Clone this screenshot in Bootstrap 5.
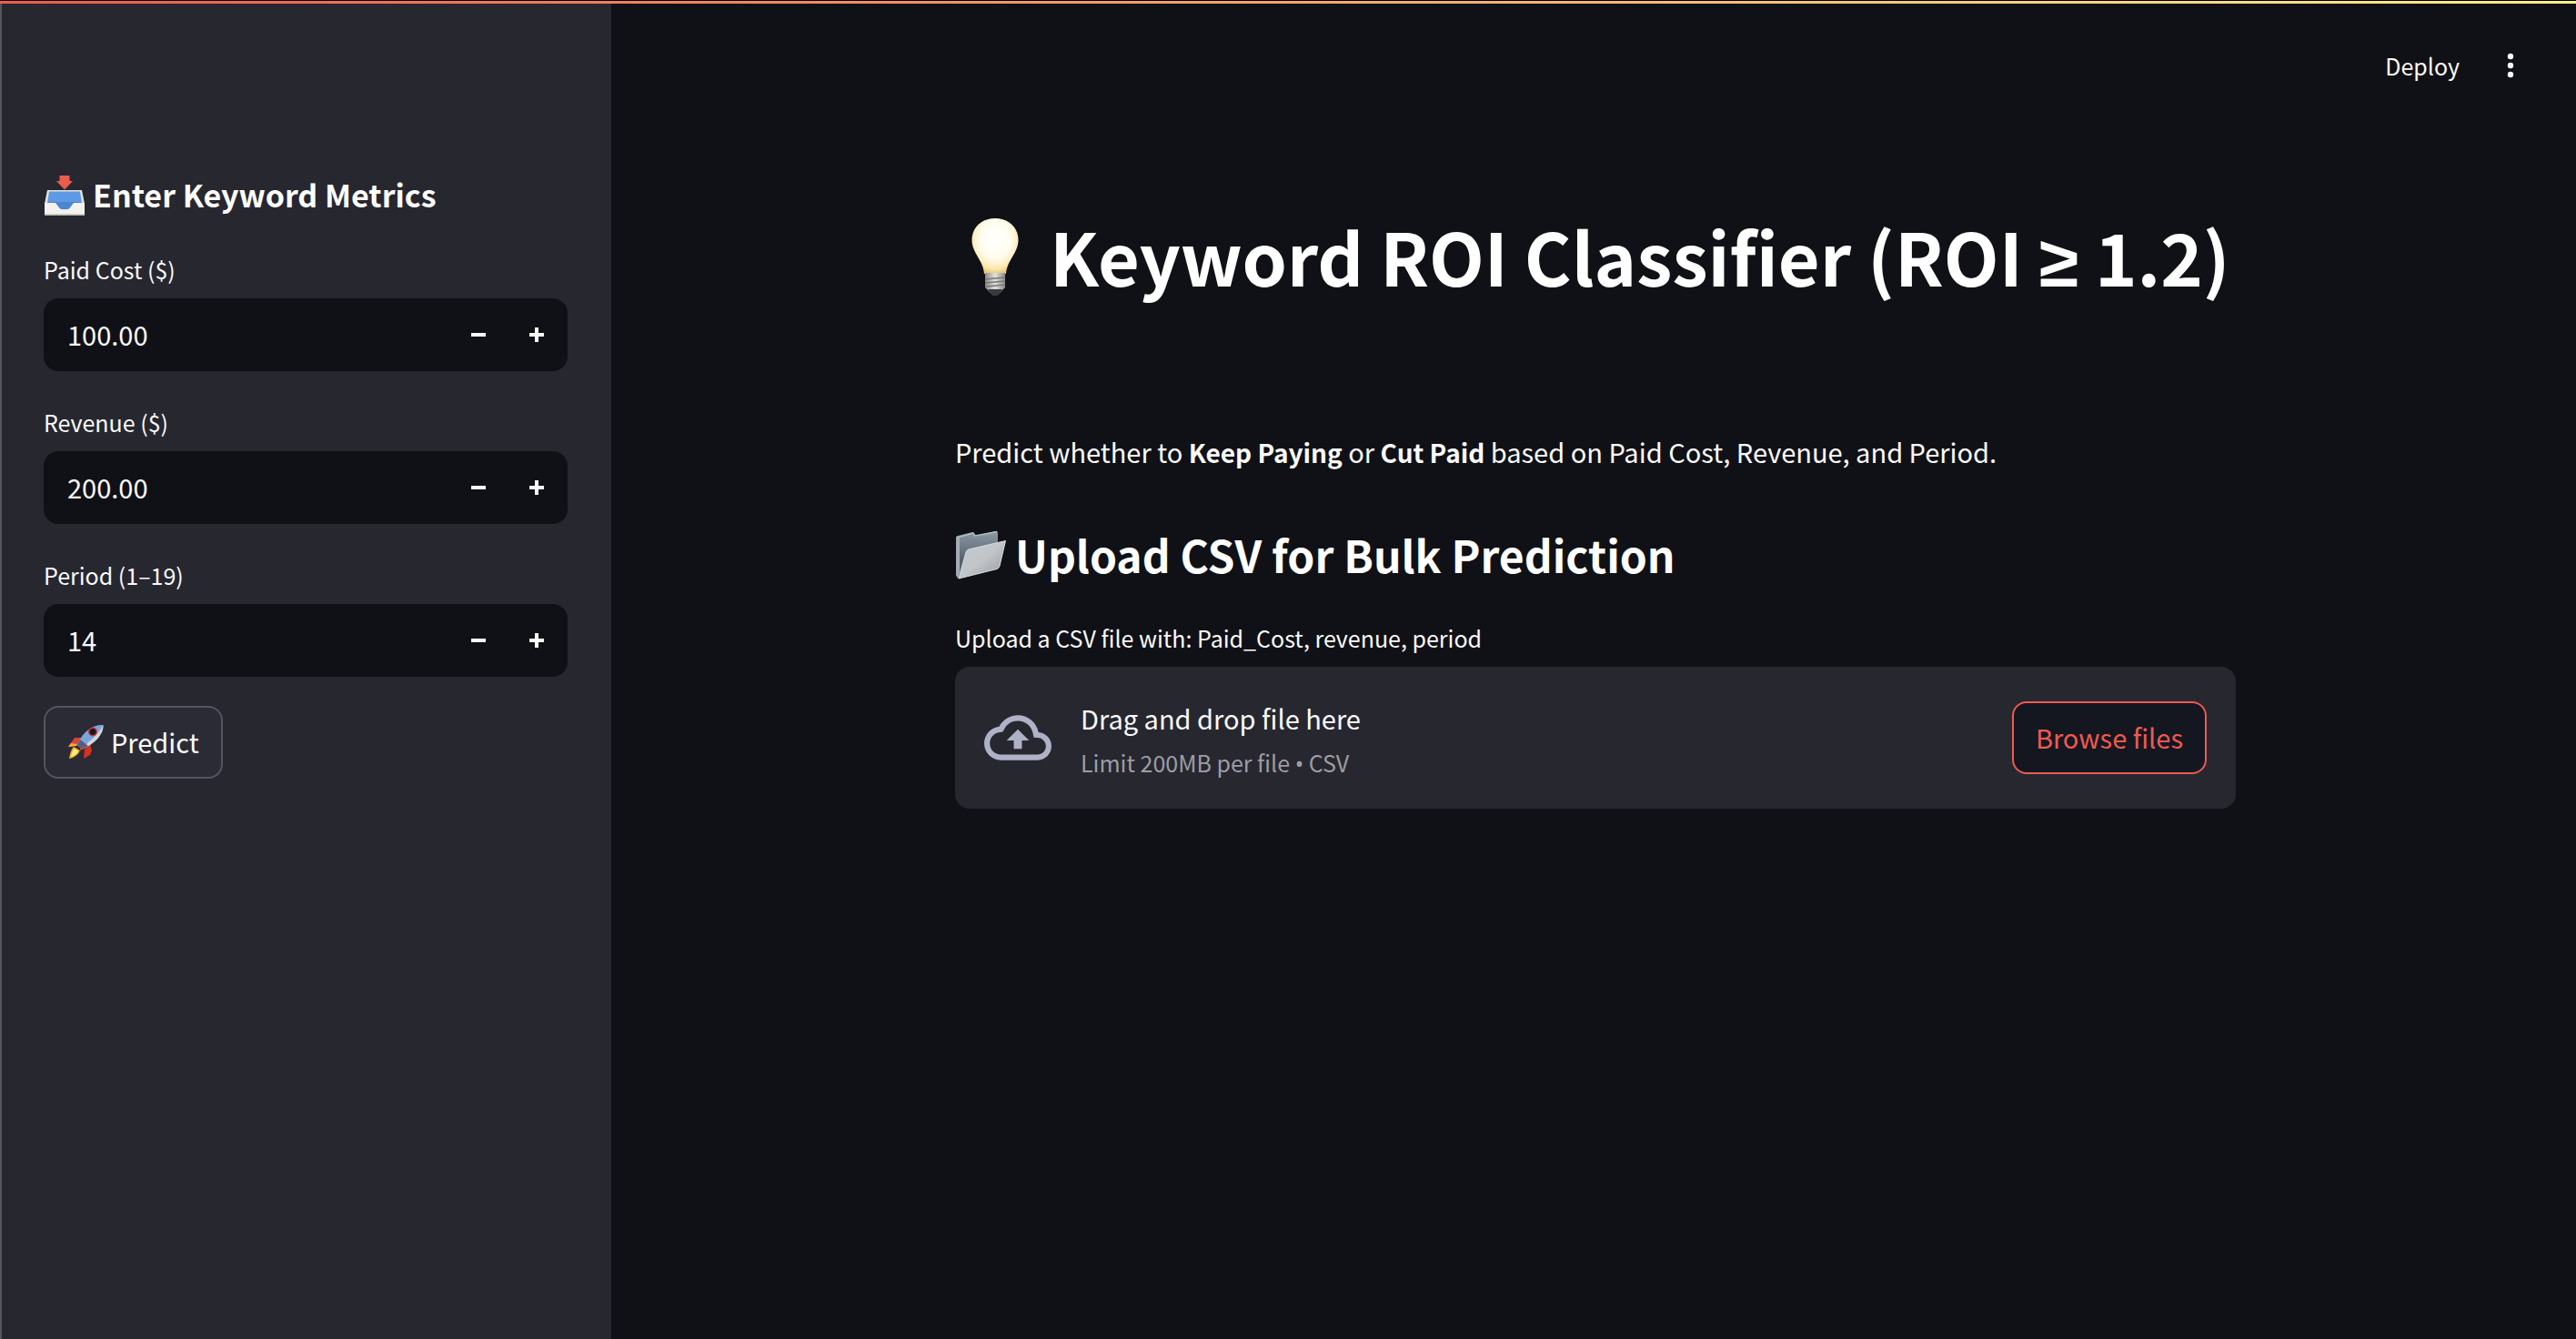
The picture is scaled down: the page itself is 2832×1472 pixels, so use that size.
<!DOCTYPE html>
<html lang="en" data-bs-theme="dark">
<head>
<meta charset="utf-8">
<meta name="viewport" content="width=device-width, initial-scale=1">
<title>Keyword ROI Classifier</title>
<link href="https://cdn.jsdelivr.net/npm/bootstrap@5.3.0/dist/css/bootstrap.min.css" rel="stylesheet">
<style>
:root{--ink:#fafafa;--page:#101116;--panel:#272730}
body{background:var(--page);color:var(--ink);font-family:"Noto Sans CJK SC","Noto Sans",sans-serif;font-size:29px;line-height:52px}
.topline{height:4px;border-top:1px solid #000;background:linear-gradient(90deg,#ee5a52,#fdf08a)}
.side{flex:0 0 672px;background:var(--panel);border-left:2px solid #55565b;padding:186px 48px 48px 46px}
.side-title{font-size:34px;line-height:48px;font-weight:700;gap:8px;margin-bottom:38px}
.fld{margin-bottom:36px}
.fld:last-of-type{margin-bottom:32px}
.lbl{font-size:25px;line-height:40px;margin-bottom:12px;display:block}
.num{height:80px;background:var(--page);border-radius:16px;overflow:hidden;padding-right:2px}
.num .form-control{background:transparent;border:0;box-shadow:none;color:var(--ink);font-size:29px;line-height:48px;padding:0 0 2px 26px;appearance:textfield}
.num input::-webkit-inner-spin-button{appearance:none;margin:0}
.step{flex:none;width:64px;border:0;background:transparent;color:var(--ink);padding:0}
.ctl{height:80px;border-radius:16px;font-size:29px;line-height:48px;padding:0 24px 2px;border-width:2px}
.ctl-predict{background:#2b2b36;border-color:#54555f;color:var(--ink);gap:8px}
.ctl-browse{background:#141720;border-color:#ee5a52;color:#ee5a52}
.appbar{height:136px;padding:0 56px 0 0;gap:40px}
.appbar .btn{font-size:25px;line-height:36px;color:var(--ink);border:0;padding:0}
.menu{width:32px}
.body-col{width:100%;max-width:1408px}
.main-title{font-size:79px;line-height:106px;font-weight:700;gap:16px;padding-top:88px;margin-bottom:136px}
.intro strong{font-size:28px}
.symbol{font-family:"Noto Sans",sans-serif;line-height:1}
.sub-title{font-size:48px;line-height:60px;font-weight:700;gap:10px;margin:56px 0 42px}
.drop{background:var(--panel);border-radius:16px;min-height:156px;padding:0 32px;gap:32px}
.drop-main{line-height:50px}
.drop-note{font-size:25px;line-height:48px;color:#9d9da1}
svg{flex:none;display:block}
</style>
<script src="https://cdn.jsdelivr.net/npm/bootstrap@5.3.0/dist/js/bootstrap.bundle.min.js"></script>
</head>
<body class="d-flex flex-column min-vh-100">
<div class="topline"></div>
<div class="d-flex flex-grow-1">
  <aside class="side">
    <h2 class="side-title d-flex align-items-center">
      <svg width="46" height="48" viewBox="0 0 46 48" aria-hidden="true">
        <path d="M4 19H42L45 34V46H1V34Z" fill="#e3e2dd"/>
        <path d="M6 20.500H40L42 33H4Z" fill="#5f99e6"/><path d="M5 32H41V40H5Z" fill="#4a86d2"/>
        <path d="M1 33H12C15 33 16 41 23 41S31 33 34 33H45V46.500H1Z" fill="#f3f2ee"/>
        <path d="M1 45H45V46.500H1Z" fill="#d0cfca"/>
        <path d="M17.500 3H28.500V9H32L23 18.500L14 9H17.500Z" fill="#e95c4e"/>
      </svg>
      <span>Enter Keyword Metrics</span>
    </h2>
    <form>
      <div class="fld">
        <label class="lbl" for="cost">Paid Cost ($)</label>
        <div class="num d-flex">
          <input class="form-control" id="cost" type="number" step="0.01" value="100.00">
          <button class="step" type="button" aria-label="Decrease paid cost"><svg class="mx-auto" width="16" height="16"><path d="M0 6H16V10H0Z" fill="currentColor"/></svg></button>
          <button class="step" type="button" aria-label="Increase paid cost"><svg class="mx-auto" width="16" height="16"><path d="M0 6H6V0H10V6H16V10H10V16H6V10H0Z" fill="currentColor"/></svg></button>
        </div>
      </div>
      <div class="fld">
        <label class="lbl" for="rev">Revenue ($)</label>
        <div class="num d-flex">
          <input class="form-control" id="rev" type="number" step="0.01" value="200.00">
          <button class="step" type="button" aria-label="Decrease revenue"><svg class="mx-auto" width="16" height="16"><path d="M0 6H16V10H0Z" fill="currentColor"/></svg></button>
          <button class="step" type="button" aria-label="Increase revenue"><svg class="mx-auto" width="16" height="16"><path d="M0 6H6V0H10V6H16V10H10V16H6V10H0Z" fill="currentColor"/></svg></button>
        </div>
      </div>
      <div class="fld">
        <label class="lbl" for="per">Period (1–19)</label>
        <div class="num d-flex">
          <input class="form-control" id="per" type="number" min="1" max="19" value="14">
          <button class="step" type="button" aria-label="Decrease period"><svg class="mx-auto" width="16" height="16"><path d="M0 6H16V10H0Z" fill="currentColor"/></svg></button>
          <button class="step" type="button" aria-label="Increase period"><svg class="mx-auto" width="16" height="16"><path d="M0 6H6V0H10V6H16V10H10V16H6V10H0Z" fill="currentColor"/></svg></button>
        </div>
      </div>
      <button class="btn ctl ctl-predict d-inline-flex align-items-center" type="button">
        <svg width="40" height="40" viewBox="0 0 40 40" aria-hidden="true">
          <path d="M8 16L16 16L11 25L1 26Z" fill="#e0432f"/><path d="M4 22L11 23L10 25L1 26Z" fill="#f6a83c"/>
          <path d="M25 23L27 30L25 35L18 39L19 29Z" fill="#d9301f"/>
          <path d="M7 26L14 30C12 35 7 38 2 39C3 34 4 29 7 26Z" fill="#f9b233"/><path d="M8 28L12 31C10 34 7 36 4 37C5 33 6 30 8 28Z" fill="#fff27a"/>
          <path d="M39.500 2C40 12 31 22 16 29L11 24C15 12 27 1 39.500 2Z" fill="#7ba5dc"/>
          <path d="M39.500 2C40 12 31 22 16 29L14 27C26 20 34 12 39.500 2Z" fill="#d3d7dc"/>
          <path d="M14 18L23 25L16 29L11 24Z" fill="#44648f"/>
          <path d="M23 21L12 33L15 27Z" fill="#e0331f"/>
          <circle cx="28" cy="9.500" r="5" fill="#c8372f"/><circle cx="28" cy="9.500" r="3.500" fill="#151a24"/>
        </svg>
        <span>Predict</span>
      </button>
    </form>
  </aside>
  <main class="flex-grow-1 d-flex flex-column ps-1">
    <header class="appbar d-flex align-items-center justify-content-end align-self-stretch">
      <button class="btn" type="button">Deploy</button>
      <button class="btn menu" type="button" aria-label="Main menu"><svg class="mx-auto" width="8" height="28" viewBox="0 0 8 28"><g fill="currentColor"><circle cx="4" cy="4" r="3.200"/><circle cx="4" cy="14" r="3.200"/><circle cx="4" cy="24" r="3.200"/></g></svg></button>
    </header>
    <div class="body-col mx-auto">
      <h1 class="main-title d-flex align-items-center text-nowrap">
        <svg width="88" height="88" viewBox="0 0 88 88" aria-hidden="true">
          <defs><radialGradient id="bg" cx=".5" cy=".38" r=".62"><stop offset="0" stop-color="#fff"/><stop offset=".55" stop-color="#fffcee"/><stop offset=".85" stop-color="#f8e9b0"/><stop offset="1" stop-color="#ecc971"/></radialGradient>
          <linearGradient id="bs"><stop offset="0" stop-color="#8a8a88"/><stop offset=".5" stop-color="#e2e2de"/><stop offset="1" stop-color="#8a8a88"/></linearGradient></defs>
          <path d="M44 3C59 3 69.500 13 69.500 27C69.500 41 57 49 56 64H32C31 49 18.500 41 18.500 27C18.500 13 29 3 44 3Z" fill="url(#bg)"/>
          <path d="M33 63H55V79L48 86H40L33 79Z" fill="url(#bs)"/>
          <path d="M33 70L55 68M33 74L55 72M34 78L55 76" stroke="#777672" stroke-width="1.500"/>
          <path d="M36 81H52L47 88H41Z" fill="#3a3a3a"/>
        </svg>
        <span>Keyword ROI Classifier (ROI <span class="symbol">≥</span> 1.2)</span>
      </h1>
      <p class="intro mb-0">Predict whether to <strong>Keep Paying</strong> or <strong>Cut Paid</strong> based on Paid Cost, Revenue, and Period.</p>
      <h2 class="sub-title d-flex align-items-center">
        <svg width="56" height="60" viewBox="0 0 56 60" aria-hidden="true">
          <defs><linearGradient id="fb" x1="0" y1="0" x2="0" y2="1"><stop offset="0" stop-color="#8d9aa5"/><stop offset=".6" stop-color="#56636e"/></linearGradient>
          <linearGradient id="ff" x1="0" y1="0" x2="1" y2="1"><stop offset="0" stop-color="#c3c8cc"/><stop offset=".5" stop-color="#c2c6ca"/><stop offset="1" stop-color="#9298a0"/></linearGradient></defs>
          <path d="M1 12Q1 10 3 10L19 6Q21 6 21 8L22 10L45 5Q47 5 47 7V20L8 56L3 57L1 53Z" fill="url(#fb)"/>
          <path d="M1.500 12L20 7L22 10L46 5.500" fill="none" stroke="#b4bec5" stroke-width="1.500"/>
          <path d="M1 12V53L3 57L5 50V12Z" fill="#a5adb4"/>
          <path d="M12 28Q12.500 26 15 25L55.500 15.500L49 43Q48 46 46 46.500L4 57Z" fill="url(#ff)" stroke="#d9dde0" stroke-width="1"/>
        </svg>
        <span>Upload CSV for Bulk Prediction</span>
      </h2>
      <span class="lbl" id="up">Upload a CSV file with: Paid_Cost, revenue, period</span>
      <section class="drop d-flex align-items-center" aria-labelledby="up">
        <svg width="74" height="74" viewBox="0 0 24 24" fill="#afb2c6" aria-hidden="true"><path d="M19.350 10.040A7.490 7.490 0 0012 4C9.110 4 6.600 5.640 5.350 8.040A5.994 5.994 0 000 14c0 3.310 2.690 6 6 6h13c2.760 0 5-2.240 5-5 0-2.640-2.050-4.780-4.650-4.960zM19 18H6c-2.210 0-4-1.790-4-4 0-2.050 1.530-3.760 3.560-3.970l1.070-.110.500-.950A5.469 5.469 0 0112 6c2.620 0 4.880 1.860 5.390 4.430l.300 1.500 1.530.110A2.980 2.980 0 0122 15c0 1.650-1.350 3-3 3zM8 13h2.550v3h2.900v-3H16l-4-4z"/></svg>
        <div class="flex-grow-1 pt-1">
          <div class="drop-main">Drag and drop file here</div>
          <div class="drop-note">Limit 200MB per file <span class="symbol">•</span> CSV</div>
        </div>
        <button class="btn ctl ctl-browse" type="button">Browse files</button>
      </section>
    </div>
  </main>
</div>
</body>
</html>
